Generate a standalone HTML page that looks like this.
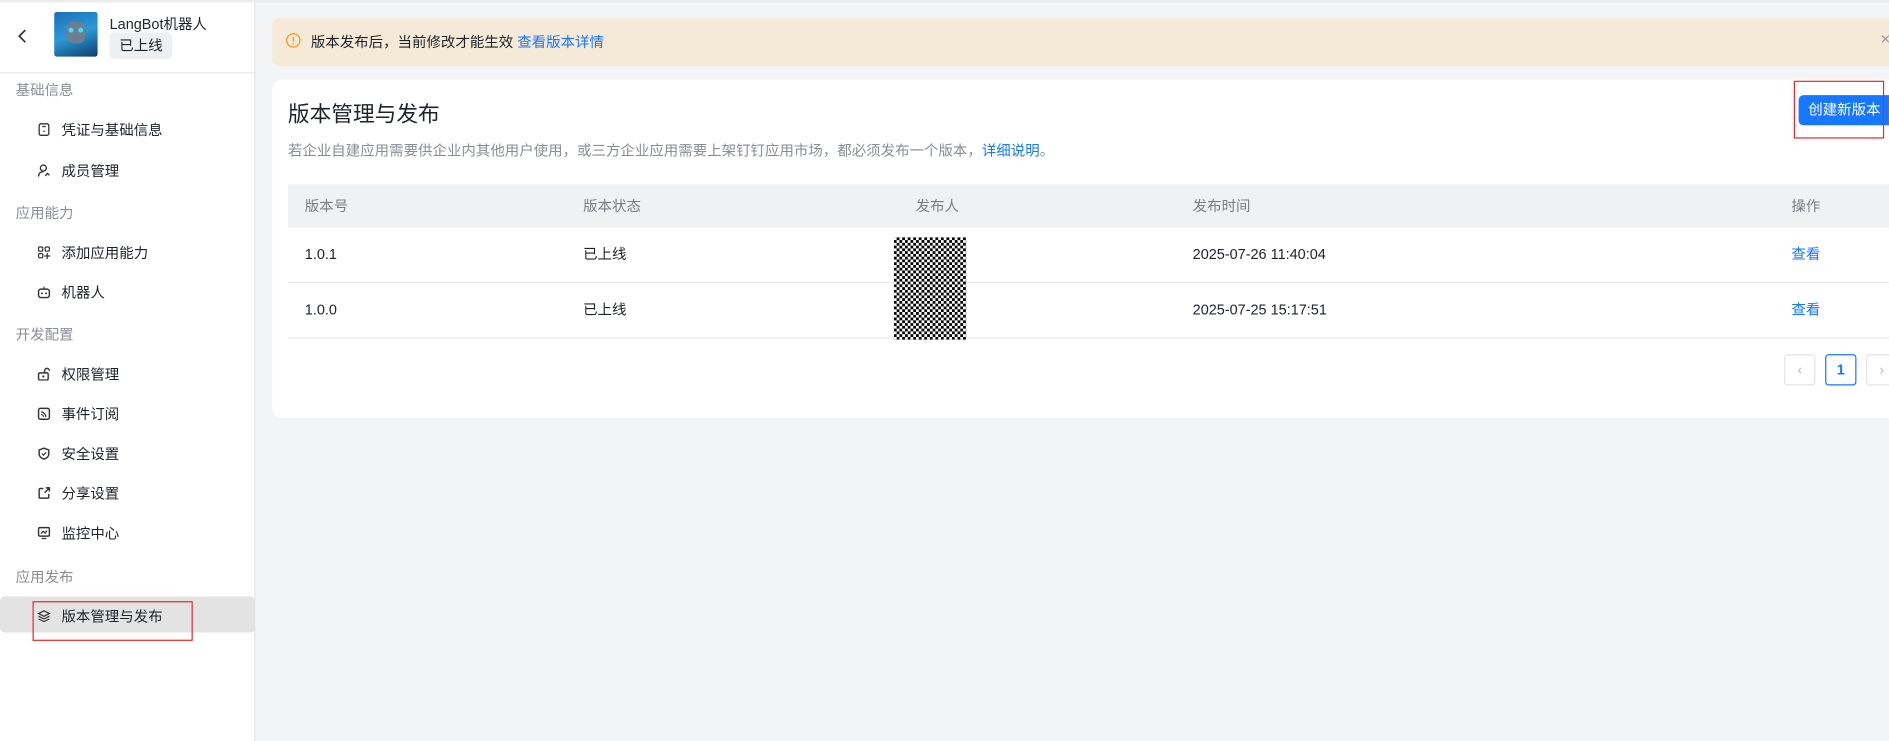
<!DOCTYPE html><html><head><meta charset="utf-8"><style>
*{box-sizing:border-box;margin:0;padding:0}
html,body{width:1889px;height:741px;overflow:hidden;background:#f3f4f6}
body{font-family:"Liberation Sans","Noto Sans CJK SC",sans-serif;color:#1f2329}
#w{position:absolute;left:0;top:0;width:1568px;height:615px;transform:scale(1.2047);transform-origin:0 0;background:#f3f4f6}
.a{position:absolute;white-space:nowrap}
.side{position:absolute;left:0;top:2px;width:212px;height:613px;background:#fff;border-right:1px solid #e3e4e6}
.lab{position:absolute;left:13px;font-size:12px;color:#8a8d93}
.it{position:absolute;left:51px;font-size:12px;color:#1f2329}
.ic{position:absolute;left:31px;width:11px;height:11px}
.th{position:absolute;top:163px;font-size:12px;line-height:16px;color:#7a7d83}
.td{position:absolute;font-size:12px;line-height:16px;color:#1f2329}
.lk{color:#1677ff}
</style></head><body><div id="w">
<div class="a" style="left:0;top:0;width:1568px;height:2px;background:#ececee"></div>
<div class="side">
 <svg class="a" style="left:14px;top:21px" width="10" height="14" viewBox="0 0 10 14"><path d="M7 2L2 7l5 5" fill="none" stroke="#333" stroke-width="1.4"/></svg>
 <div class="a" style="left:45px;top:8px;width:36px;height:37px;background:linear-gradient(160deg,#1d6fb8,#2a9ad8 50%,#0d3d6b);border-radius:2px"><div class="a" style="left:10px;top:8px;width:16px;height:18px;background:#6a7f92;border-radius:6px"></div><div class="a" style="left:12px;top:13px;width:4px;height:4px;background:#4df;border-radius:50%"></div><div class="a" style="left:20px;top:13px;width:4px;height:4px;background:#4df;border-radius:50%"></div></div>
 <div class="a" style="left:91px;top:9px;font-size:12px">LangBot机器人</div>
 <div class="a" style="left:91px;top:25px;width:52px;height:22px;background:#eeeff1;border-radius:4px;font-size:12px;line-height:22px;text-align:center">已上线</div>
 <div class="a" style="left:0;top:58px;width:212px;height:1px;background:#e3e4e6"></div>
 <div class="lab" style="top:64px">基础信息</div>
 <div class="lab" style="top:166px">应用能力</div>
 <div class="lab" style="top:267px">开发配置</div>
 <div class="lab" style="top:468px">应用发布</div>
 <div class="a" style="left:0;top:493px;width:212px;height:30px;background:#e3e3e3;border-radius:4px"></div>
 <svg class="ic" style="top:100px" viewBox="0 0 11 11"><rect x="1.5" y=".8" width="8" height="9.5" rx="1.5" fill="none" stroke="#333" stroke-width="1.1"/><path d="M4 3h3M5 7h1.5" stroke="#333"/></svg>
 <div class="it" style="top:97px">凭证与基础信息</div>
 <svg class="ic" style="top:134px" viewBox="0 0 11 11"><circle cx="5" cy="3.5" r="2.5" fill="none" stroke="#333" stroke-width="1.1"/><path d="M1 10.5c0-3 2-4 4-4M6.5 10l2-2 1.5 1.5" fill="none" stroke="#333" stroke-width="1.1"/></svg>
 <div class="it" style="top:131px">成员管理</div>
 <svg class="ic" style="top:202px" viewBox="0 0 11 11"><rect x="1" y="1" width="3.5" height="3.5" rx="1" fill="none" stroke="#333"/><rect x="6.5" y="1" width="3.5" height="3.5" rx="1" fill="none" stroke="#333"/><rect x="1" y="6.5" width="3.5" height="3.5" rx="1" fill="none" stroke="#333"/><path d="M8.2 6v5M5.7 8.5h5" stroke="#333"/></svg>
 <div class="it" style="top:199px">添加应用能力</div>
 <svg class="ic" style="top:235px" viewBox="0 0 11 11"><rect x="1" y="3" width="9" height="7" rx="2" fill="none" stroke="#333" stroke-width="1.2"/><path d="M5.5 1v2" stroke="#333"/><circle cx="3.8" cy="6.5" r=".8" fill="#333"/><circle cx="7.2" cy="6.5" r=".8" fill="#333"/></svg>
 <div class="it" style="top:232px">机器人</div>
 <svg class="ic" style="top:303px" viewBox="0 0 11 11"><rect x="1" y="4.5" width="8" height="6" rx="1.2" fill="none" stroke="#333" stroke-width="1.2"/><path d="M6 4.5V2.8a2 2 0 0 1 4 0" fill="none" stroke="#333" stroke-width="1.2"/><circle cx="5" cy="7.5" r=".9" fill="#333"/></svg>
 <div class="it" style="top:300px">权限管理</div>
 <svg class="ic" style="top:336px" viewBox="0 0 11 11"><rect x="1" y="1" width="9" height="9" rx="1.5" fill="none" stroke="#333" stroke-width="1.2"/><path d="M3 4a4 4 0 0 1 4 4M3 6a2 2 0 0 1 2 2" fill="none" stroke="#333"/></svg>
 <div class="it" style="top:333px">事件订阅</div>
 <svg class="ic" style="top:369px" viewBox="0 0 11 11"><path d="M5.5 1L1.5 2.5v3c0 2.5 2 4 4 4.5 2-.5 4-2 4-4.5v-3z" fill="none" stroke="#333" stroke-width="1.2"/><path d="M3.8 5.5l1.3 1.3 2.2-2.3" fill="none" stroke="#333"/></svg>
 <div class="it" style="top:366px">安全设置</div>
 <svg class="ic" style="top:402px" viewBox="0 0 11 11"><path d="M5 1.5H2.5a1 1 0 0 0-1 1v6a1 1 0 0 0 1 1h6a1 1 0 0 0 1-1V6M6 5l4-4M7 1h3v3" fill="none" stroke="#333" stroke-width="1.2"/></svg>
 <div class="it" style="top:399px">分享设置</div>
 <svg class="ic" style="top:435px" viewBox="0 0 11 11"><rect x="1" y="1" width="9" height="7" rx="1" fill="none" stroke="#333" stroke-width="1.2"/><path d="M3 6l2-2 1.5 1.5L8 3.5M3.5 10h4" fill="none" stroke="#333"/></svg>
 <div class="it" style="top:432px">监控中心</div>
 <svg class="ic" style="top:504px" viewBox="0 0 11 11"><path d="M5.5 1L1 3.3l4.5 2.3L10 3.3zM1 5.5l4.5 2.3L10 5.5M1 7.7L5.5 10 10 7.7" fill="none" stroke="#333" stroke-width="1"/></svg>
 <div class="it" style="top:501px">版本管理与发布</div>
 <div class="a" style="left:27px;top:497px;width:133px;height:33px;border:1.5px solid #e8272c"></div>
</div>
<div class="a" style="left:226px;top:15px;width:1342px;height:40px;background:#f5e9d8;border-radius:6px 0 0 6px"></div>
<svg class="a" style="left:237px;top:27px" width="13" height="13" viewBox="0 0 13 13"><circle cx="6.5" cy="6.5" r="5.5" fill="none" stroke="#f59a23" stroke-width="1.1"/><path d="M6.5 3.5v4M6.5 8.8v1" stroke="#f59a23" stroke-width="1.2"/></svg>
<div class="a" style="left:258px;top:26px;font-size:12px">版本发布后，当前修改才能生效 <span class="lk">查看版本详情</span></div>
<div class="a" style="left:1561px;top:24px;font-size:14px;color:#999">×</div>
<div class="a" style="left:226px;top:66px;width:1342px;height:281px;background:#fff;border-radius:8px 0 0 8px"></div>
<div class="a" style="left:239px;top:81px;font-size:18px;color:#1f2329">版本管理与发布</div>
<div class="a" style="left:239px;top:116px;font-size:12px;color:#8a8d93">若企业自建应用需要供企业内其他用户使用，或三方企业应用需要上架钉钉应用市场，都必须发布一个版本，<span class="lk">详细说明</span>。</div>
<div class="a" style="left:1493px;top:79px;width:75px;height:25px;background:#1677ff;border-radius:4px 0 0 4px;color:#fff;font-size:12px;line-height:25px;padding-left:8px">创建新版本</div>
<div class="a" style="left:1489px;top:67px;width:75px;height:48px;border:1.5px solid #e8272c"></div>
<div class="a" style="left:239px;top:153px;width:1329px;height:36px;background:#f0f1f3"></div>
<div class="th" style="left:253px">版本号</div><div class="th" style="left:484px">版本状态</div><div class="th" style="left:760px">发布人</div><div class="th" style="left:990px">发布时间</div><div class="th" style="left:1487px">操作</div>
<div class="a" style="left:239px;top:234px;width:1329px;height:1px;background:#e8e9eb"></div>
<div class="a" style="left:239px;top:280px;width:1329px;height:1px;background:#e8e9eb"></div>
<div class="td" style="left:253px;top:203px">1.0.1</div><div class="td" style="left:484px;top:203px">已上线</div><div class="td" style="left:990px;top:203px">2025-07-26 11:40:04</div><div class="td lk" style="left:1487px;top:203px">查看</div>
<div class="td" style="left:253px;top:249px">1.0.0</div><div class="td" style="left:484px;top:249px">已上线</div><div class="td" style="left:990px;top:249px">2025-07-25 15:17:51</div><div class="td lk" style="left:1487px;top:249px">查看</div>
<div class="a" style="left:742px;top:197px;width:60px;height:85px;background:repeating-conic-gradient(#000 0 25%,#fff 0 50%) 0 0/4.6px 4.6px"></div>
<div class="a" style="left:1481px;top:294px;width:26px;height:26px;border:1px solid #e3e4e6;border-radius:3px;color:#bbb;font-size:12px;text-align:center;line-height:24px">‹</div>
<div class="a" style="left:1515px;top:294px;width:26px;height:26px;border:1px solid #1677ff;border-radius:3px;color:#1677ff;font-size:12px;font-weight:bold;text-align:center;line-height:24px">1</div>
<div class="a" style="left:1549px;top:294px;width:26px;height:26px;border:1px solid #e3e4e6;border-radius:3px;color:#bbb;font-size:12px;text-align:center;line-height:24px">›</div>
</div></body></html>
